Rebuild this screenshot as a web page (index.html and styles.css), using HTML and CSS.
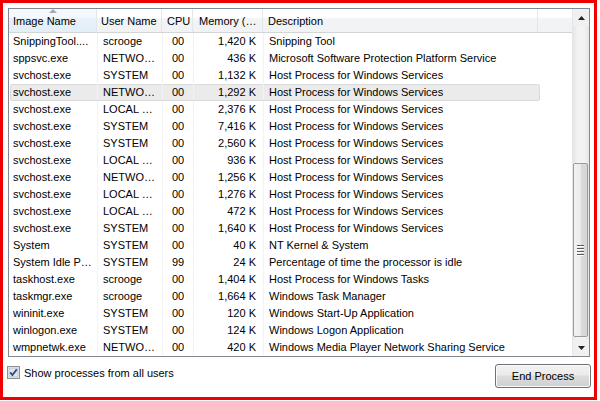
FILE: index.html
```html
<!DOCTYPE html>
<html lang="en">
<head>
    <meta charset="UTF-8">
    <title>Windows Task Manager - Processes</title>
    <link rel="stylesheet" href="styles.css">
</head>
<body>
    <div class="frame">
        <div class="list-box">
            <div class="list-main">
                <div class="list-header">
                    <div class="hcol col-image sorted">Image Name<span class="sort-arrow"></span></div>
                    <div class="hcol col-user">User Name</div>
                    <div class="hcol col-cpu">CPU</div>
                    <div class="hcol col-mem">Memory (…</div>
                    <div class="hcol col-desc">Description</div>
                    <div class="hcol col-blank"></div>
                </div>
                <div class="rows" id="rows"></div>
            </div>
            <div class="scrollbar">
                <div class="sb-arrow">
                    <svg width="7" height="4" viewBox="0 0 7 4"><path d="M0 4 L3.5 0 L7 4 Z" fill="#222"/></svg>
                </div>
                <div class="sb-track">
                    <div class="sb-thumb">
                        <span class="grip"></span><span class="grip"></span><span class="grip"></span><span class="grip"></span>
                    </div>
                </div>
                <div class="sb-arrow">
                    <svg width="7" height="4" viewBox="0 0 7 4"><path d="M0 0 L7 0 L3.5 4 Z" fill="#222"/></svg>
                </div>
            </div>
        </div>

        <div class="bottom">
            <label class="check">
                <svg class="check-box" width="13" height="13" viewBox="0 0 13 13">
                    <rect x="0.5" y="0.5" width="12" height="12" fill="#f4f4f4" stroke="#8e8f8f"/>
                    <rect x="2" y="2" width="9" height="9" fill="#dfe6ee" stroke="#b4bfca" stroke-width="0.8"/>
                    <path d="M3.2 6.4 L5.4 9 L9.8 3.4" fill="none" stroke="#2a4f85" stroke-width="1.8"/>
                </svg>
                Show processes from all users
            </label>
            <button class="end-button">End Process</button>
        </div>
    </div>

    <script>
        const processes = [
            ['SnippingTool....', 'scrooge', '00', '1,420 K', 'Snipping Tool'],
            ['sppsvc.exe', 'NETWO…', '00', '436 K', 'Microsoft Software Protection Platform Service'],
            ['svchost.exe', 'SYSTEM', '00', '1,132 K', 'Host Process for Windows Services'],
            ['svchost.exe', 'NETWO…', '00', '1,292 K', 'Host Process for Windows Services'],
            ['svchost.exe', 'LOCAL …', '00', '2,376 K', 'Host Process for Windows Services'],
            ['svchost.exe', 'SYSTEM', '00', '7,416 K', 'Host Process for Windows Services'],
            ['svchost.exe', 'SYSTEM', '00', '2,560 K', 'Host Process for Windows Services'],
            ['svchost.exe', 'LOCAL …', '00', '936 K', 'Host Process for Windows Services'],
            ['svchost.exe', 'NETWO…', '00', '1,256 K', 'Host Process for Windows Services'],
            ['svchost.exe', 'LOCAL …', '00', '1,276 K', 'Host Process for Windows Services'],
            ['svchost.exe', 'LOCAL …', '00', '472 K', 'Host Process for Windows Services'],
            ['svchost.exe', 'SYSTEM', '00', '1,640 K', 'Host Process for Windows Services'],
            ['System', 'SYSTEM', '00', '40 K', 'NT Kernel & System'],
            ['System Idle P…', 'SYSTEM', '99', '24 K', 'Percentage of time the processor is idle'],
            ['taskhost.exe', 'scrooge', '00', '1,404 K', 'Host Process for Windows Tasks'],
            ['taskmgr.exe', 'scrooge', '00', '1,664 K', 'Windows Task Manager'],
            ['wininit.exe', 'SYSTEM', '00', '120 K', 'Windows Start-Up Application'],
            ['winlogon.exe', 'SYSTEM', '00', '124 K', 'Windows Logon Application'],
            ['wmpnetwk.exe', 'NETWO…', '00', '420 K', 'Windows Media Player Network Sharing Service']
        ];

        const selectedRow = 3;
        const rowsEl = document.getElementById('rows');
        const cls = ['col-image', 'col-user', 'col-cpu', 'col-mem', 'col-desc'];

        processes.forEach((p, index) => {
            const row = document.createElement('div');
            row.className = 'row' + (index === selectedRow ? ' selected' : '');
            p.forEach((text, i) => {
                const cell = document.createElement('div');
                cell.className = 'cell ' + cls[i];
                cell.textContent = text;
                row.appendChild(cell);
            });
            rowsEl.appendChild(row);
        });
    </script>
</body>
</html>
```

FILE: styles.css
```css
body {
    margin: 0;
    background: #fff;
    font-family: "Liberation Sans", Arial, sans-serif;
    font-size: 11px;
    color: #000;
}

.frame {
    width: 586px;
    height: 389px;
    border: 3px solid #f00000;
    padding: 5px 0 0 5px;
    display: flex;
    flex-direction: column;
}

.list-box {
    width: 580px;
    height: 347px;
    border: 1px solid #828790;
    display: flex;
    background: #fff;
}

.list-main {
    width: 563px;
    display: flex;
    flex-direction: column;
}

.list-header {
    display: flex;
    height: 23px;
    border-bottom: 1px solid #d5d5d5;
    background: linear-gradient(#ffffff 0%, #ffffff 40%, #f3f4f6 41%, #f1f2f4 100%);
}

.hcol {
    position: relative;
    box-sizing: border-box;
    height: 23px;
    line-height: 24px;
    padding-left: 4px;
    border-right: 1px solid #e3e6ea;
    white-space: nowrap;
    overflow: hidden;
}

.hcol.sorted {
    background: linear-gradient(#f4f9fd 0%, #f4f9fd 40%, #e8f1f9 41%, #e4eef7 100%);
    overflow: visible;
}

.sort-arrow {
    position: absolute;
    left: 40px;
    top: 0;
    width: 0;
    height: 0;
    border-left: 4px solid transparent;
    border-right: 4px solid transparent;
    border-bottom: 4px solid #a5abb3;
}

.col-image { width: 88px; }
.col-user { width: 65px; }
.col-cpu { width: 31px; }
.col-mem { width: 70px; }
.col-desc { width: 275px; }
.col-blank { width: 34px; border-right: none; }

.list-header .col-cpu { padding-left: 5px; }
.list-header .col-mem { padding-left: 6px; }
.list-header .col-desc { padding-left: 5px; }

.rows {
    flex: 1;
}

.row {
    display: flex;
    height: 17px;
    line-height: 17px;
    box-sizing: border-box;
    border: 1px solid transparent;
    width: 530px;
    margin-left: 1px;
}

.row.selected {
    background: #ebebeb;
    border-color: #dadada;
    border-radius: 2px;
}

.cell {
    box-sizing: border-box;
    white-space: nowrap;
    overflow: hidden;
    margin-top: -1px;
}

.row .col-image { width: 87px; padding-left: 2px; border-right: 1px solid #f2f2f2; }
.row .col-user { width: 65px; padding-left: 5px; border-right: 1px solid #f2f2f2; }
.row .col-cpu { width: 31px; padding-left: 9px; border-right: 1px solid #f2f2f2; }
.row .col-mem { width: 70px; text-align: right; padding-right: 7px; border-right: 1px solid #f2f2f2; }
.row .col-desc { width: 275px; padding-left: 5px; }

.scrollbar {
    width: 17px;
    display: flex;
    flex-direction: column;
    background: #f0f0f0;
    border-left: 1px solid #e6e6e6;
}

.sb-arrow {
    height: 17px;
    display: flex;
    align-items: center;
    justify-content: center;
}

.sb-track {
    flex: 1;
    display: flex;
    flex-direction: column;
    justify-content: flex-end;
    padding-bottom: 2px;
    background: linear-gradient(90deg, #e6e6e6, #f3f3f3 30%, #f3f3f3 70%, #e6e6e6);
}

.sb-thumb {
    height: 172px;
    margin: 0 1px 0 0;
    border: 1px solid #9b9b9b;
    border-radius: 2px;
    background: linear-gradient(90deg, #f2f2f2, #ebebeb 50%, #dadada 51%, #d6d6d6);
    display: flex;
    flex-direction: column;
    align-items: center;
    justify-content: center;
    gap: 1px;
}

.grip {
    width: 7px;
    height: 1px;
    background: #5a5a5a;
    border-bottom: 1px solid #fff;
}

.bottom {
    display: flex;
    justify-content: space-between;
    align-items: flex-start;
    padding: 7px 3px 0 0;
}

.check {
    display: flex;
    align-items: center;
    gap: 4px;
    margin-top: 2px;
    margin-left: -1px;
}

.check-box {
    display: block;
}

.end-button {
    width: 96px;
    height: 24px;
    font-family: "Liberation Sans", Arial, sans-serif;
    font-size: 11px;
    color: #000;
    border: 1px solid #707070;
    border-radius: 3px;
    background: linear-gradient(#f2f2f2 0%, #ebebeb 45%, #dddddd 50%, #cfcfcf 100%);
    box-shadow: inset 0 0 0 1px #fcfcfc;
    padding: 0;
}
```
